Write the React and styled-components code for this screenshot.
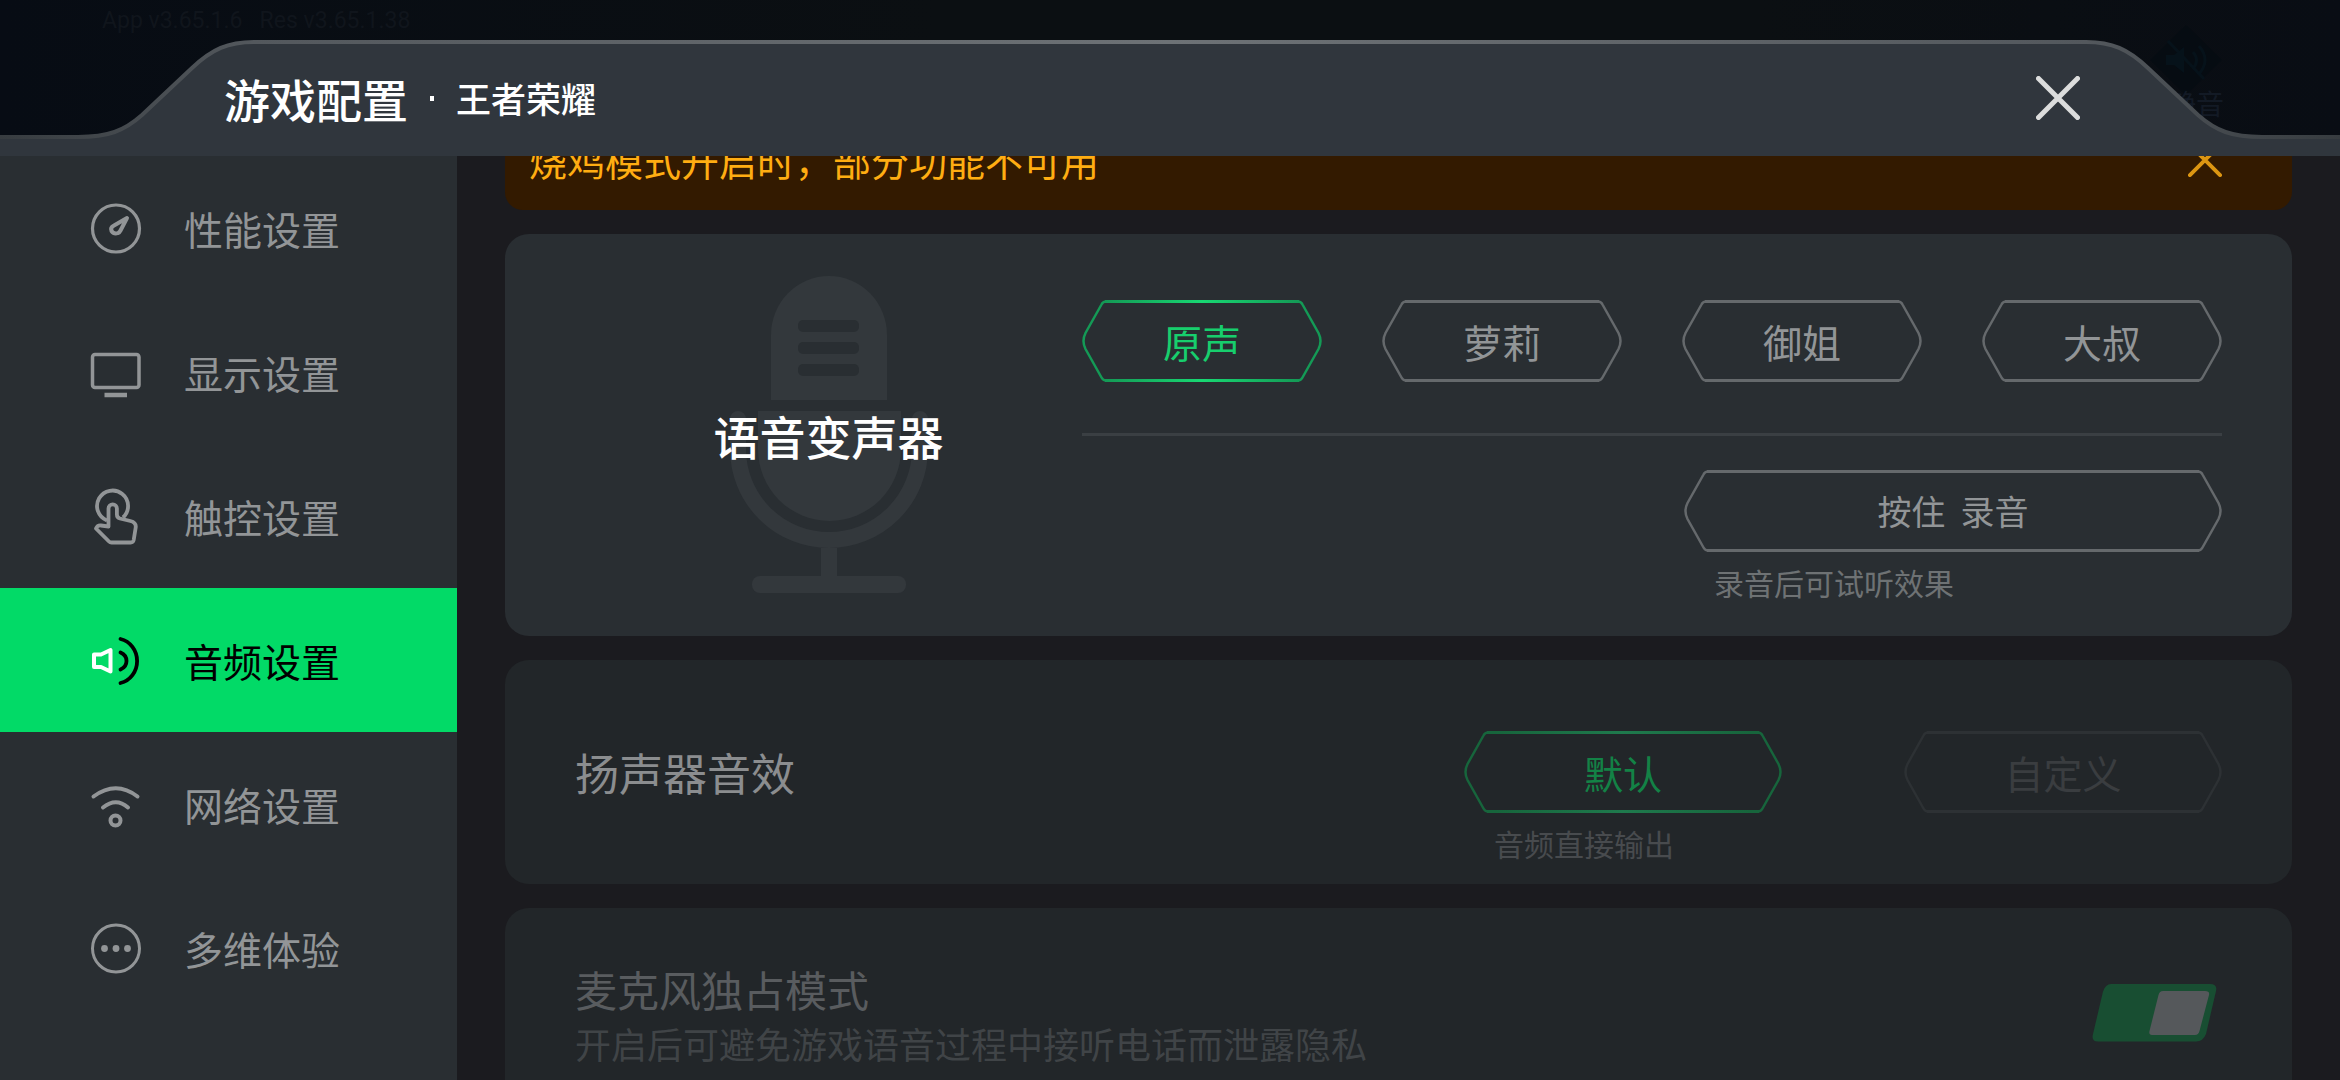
import React, { useId, useState } from "react";
import styled, { createGlobalStyle, css } from "styled-components";

const GlobalStyle = createGlobalStyle`
  *, *::before, *::after { box-sizing: border-box; }
  body {
    margin: 0;
    background: #090d14;
    font-family: "Noto Sans CJK SC", "Noto Sans", sans-serif;
  }
  button { font-family: inherit; }
`;

const Page = styled.div`
  display: flex;
  flex-direction: column;
  height: 100vh;
  overflow: hidden;
  background: #090d14;
`;

/* ---------- header ---------- */

const Header = styled.header`
  display: grid;
  flex: none;
  height: 156px;
  background: linear-gradient(90deg, #070c14, #0b0f12 40%, #0b0f12 75%, #090d14);
  > * { grid-area: 1 / 1; }
`;

const GameBackdrop = styled.div`
  display: flex;
  justify-content: space-between;
  padding: 3px 116px 0 102px;
  font-family: Roboto, "Noto Sans CJK SC", sans-serif;
  font-size: 23px;
  line-height: 36px;
  color: #10151c;
  white-space: pre;
`;

const MuteBadge = styled.div`
  display: flex;
  flex-direction: column;
  align-items: flex-end;
  padding-top: 22px;
  font-size: 28px;
  line-height: 22px;
  color: #131a25;
`;

const Shell = styled.div`
  display: flex;
`;

const ShellCorner = styled.svg`
  display: block;
  flex: none;
  width: 254px;
  height: 156px;
  transform: ${(p) => (p.$flip ? "scaleX(-1)" : "none")};
`;

const ShellMiddle = styled.div`
  flex: 1;
  margin-top: 40px;
  background:
    linear-gradient(90deg, #53585d, #6d7276 50%, #53585d) top / 100% 4px no-repeat,
    #30363d;
`;

const HeaderContent = styled.div`
  display: flex;
  align-items: center;
  margin-top: 40px;
  padding: 0 260px 0 224px;
  color: #fff;
`;

const Title = styled.h1`
  margin: 0;
  font-size: 46px;
  line-height: 60px;
  font-weight: 500;
`;

const Dot = styled.span`
  width: 4px;
  height: 5px;
  margin: 0 22px;
  background: #fff;
`;

const GameName = styled.span`
  font-size: 35px;
  line-height: 60px;
  font-weight: 500;
`;

const IconButton = styled.button`
  display: flex;
  padding: 0;
  margin-left: auto;
  border: 0;
  background: none;
  color: ${(p) => p.$color};
  cursor: pointer;
  svg { display: block; width: ${(p) => p.$size}px; height: ${(p) => p.$size}px; }
`;

/* ---------- body ---------- */

const Body = styled.div`
  display: flex;
  flex: 1;
  min-height: 0;
`;

const Sidebar = styled.nav`
  flex: none;
  width: 457px;
  background: #292e32;
`;

const NavItem = styled.button`
  display: flex;
  align-items: center;
  gap: 42px;
  width: 100%;
  height: 144px;
  padding: 0 0 0 90px;
  border: 0;
  background: ${(p) => (p.$active ? "#02da67" : "transparent")};
  color: ${(p) => (p.$active ? "#000" : "#929597")};
  font-size: 39px;
  line-height: 56px;
  text-align: left;
  cursor: pointer;
  svg { display: block; width: 52px; height: 52px; overflow: visible; }
`;

const Main = styled.main`
  flex: 1;
  min-width: 0;
  overflow: hidden;
  padding: 0 48px;
  background: #1b1b1f;
`;

/* The list is scrolled so that the notice is half under the header. */
const List = styled.div`
  display: flex;
  flex-direction: column;
  gap: 24px;
  margin-top: -46px;
`;

const Notice = styled.div`
  display: flex;
  align-items: center;
  height: 100px;
  padding: 0 70px 0 24px;
  border-radius: 18px;
  background: #331a00;
  color: #ffad12;
  font-size: 38px;
  line-height: 56px;
`;

const Card = styled.section`
  display: flex;
  align-items: center;
  justify-content: space-between;
  padding: 0 70px;
  border-radius: 24px;
  background: ${(p) => (p.$disabled ? "#222629" : "#292e32")};
`;

const VoiceHero = styled.div`
  display: grid;
  flex: 1;
  place-items: center;
  > * { grid-area: 1 / 1; }
`;

const MicArt = styled.svg`
  display: block;
  width: 198px;
  height: 318px;
`;

const HeroTitle = styled.h2`
  margin: 0;
  z-index: 1;
  font-size: 46px;
  line-height: 60px;
  font-weight: 500;
  color: #fff;
`;

const VoiceControls = styled.div`
  display: flex;
  flex-direction: column;
  align-items: flex-end;
  padding: 66px 0 32px;
`;

const ChipRow = styled.div`
  display: flex;
  gap: ${(p) => p.$gap}px;
`;

const Divider = styled.hr`
  width: 100%;
  height: 3px;
  margin: 51px 0 34px;
  border: 0;
  background: #3a3f43;
`;

const Field = styled.div`
  display: flex;
  flex-direction: column;
`;

const Hint = styled.p`
  margin: 8px 0 0;
  padding-left: 30px;
  font-size: 30px;
  line-height: 44px;
  color: ${(p) => (p.$disabled ? "#484b4e" : "#6e7274")};
`;

const tones = {
  on: { text: "#17ce6d", edge: "#149a56", glow: "#18d873" },
  off: { text: "#929597", edge: "#65696c", glow: "#65696c" },
  onDim: { text: "#138246", edge: "#17653c", glow: "#1f7a4d" },
  offDim: { text: "#3a3d40", edge: "#2d3134", glow: "#2d3134" },
};

const ChipButton = styled.button`
  display: grid;
  place-items: center;
  padding: 0;
  border: 0;
  background: none;
  color: ${(p) => p.$tone.text};
  font-size: ${(p) => (p.$small ? 34 : 39)}px;
  line-height: 56px;
  white-space: pre;
  cursor: pointer;
  > * { grid-area: 1 / 1; }
  svg { display: block; }
`;

const OutputControls = styled.div`
  padding: 71px 0 19px;
`;

const RowTitle = styled.h2`
  margin: 0;
  font-size: 44px;
  line-height: 60px;
  font-weight: 400;
  color: #8b8d8f;
`;

const ToggleText = styled.div`
  display: flex;
  flex-direction: column;
  padding: 51px 0;
`;

const ToggleLabel = styled.label`
  font-size: 42px;
  line-height: 60px;
  color: #595c5f;
`;

const ToggleNote = styled.span`
  font-size: 36px;
  line-height: 48px;
  color: #404447;
`;

const stacked = css`grid-area: 1 / 1;`;

const Switch = styled.div`
  display: grid;
  width: 130px;
  height: 60px;
  svg { ${stacked} display: block; }
`;

const SwitchInput = styled.input`
  ${stacked}
  z-index: 1;
  width: 100%;
  height: 100%;
  margin: 0;
  opacity: 0;
`;

/* ---------- drawings ---------- */

function Cross({ width }) {
  return (
    <svg viewBox="0 0 44 44" fill="none" stroke="currentColor" strokeWidth={width} strokeLinecap="round">
      <path d="M2.5 2.5 41.5 41.5M41.5 2.5 2.5 41.5" />
    </svg>
  );
}

const cornerEdge = "M0 137 H78 C108 137 124 131 142 115 L192 68 C212 49 228 42 254 42";

function Corner({ flip }) {
  const id = useId();
  return (
    <ShellCorner $flip={flip} viewBox="0 0 254 156" aria-hidden="true">
      <defs>
        <linearGradient id={id} gradientUnits="userSpaceOnUse" x1="0" y1="0" x2="254" y2="0">
          <stop offset="0" stopColor="#373c40" />
          <stop offset="1" stopColor="#53585d" />
        </linearGradient>
      </defs>
      <path d={cornerEdge + " V156 H0 Z"} fill="#30363d" />
      <path d={cornerEdge} fill="none" stroke={`url(#${id})`} strokeWidth="4" />
    </ShellCorner>
  );
}

function MuteIcon() {
  return (
    <svg width="76" height="70" viewBox="0 0 76 70" aria-hidden="true">
      <path d="M38 0 74 35 38 70 2 35Z" fill="#060c12" />
      <path d="M18 30h8l10-8v26l-10-8h-8z" fill="#06121a" />
      <path d="M45 27q7 8 0 17M51 21q12 14 0 28M20 16 56 54" fill="none" stroke="#06121a" strokeWidth="3" />
    </svg>
  );
}

function Mic() {
  return (
    <MicArt viewBox="0 0 198 318" fill="#33383c" aria-hidden="true">
      <path d="M41 124V59a58 59 0 0 1 116 0v65z" />
      <g fill="#292e32">
        <rect x="68" y="44" width="61" height="12" rx="5" />
        <rect x="68" y="66" width="61" height="12" rx="5" />
        <rect x="68" y="88" width="61" height="12" rx="5" />
      </g>
      <path d="M28 135H171V173a71.500 72 0 0 1-143 0z" />
      <path d="M8 143v30a91 91 0 0 0 182 0v-30" fill="none" stroke="#33383c" strokeWidth="16" strokeLinecap="round" />
      <rect x="91" y="272" width="16" height="28" />
      <rect x="22" y="300" width="154" height="17" rx="8" />
    </MicArt>
  );
}

function Chip({ width, tone, small, children, pressed, disabled, onClick }) {
  const id = useId();
  const t = tones[tone];
  const r = width - 1;
  return (
    <ChipButton type="button" $tone={t} $small={small} aria-pressed={pressed} disabled={disabled} onClick={onClick}>
      <svg width={width} height="82" viewBox={`0 0 ${width} 82`} fill="none" aria-hidden="true">
        <defs>
          <linearGradient id={id} gradientUnits="userSpaceOnUse" x1="0" y1="0" x2={width} y2="0">
            <stop offset="0.1" stopColor={t.edge} />
            <stop offset="0.5" stopColor={t.glow} />
            <stop offset="0.9" stopColor={t.edge} />
          </linearGradient>
        </defs>
        <path
          d={`M24 1.500 Q21 1.500 19.500 4.500 L3.500 33 Q-.5 41 3.500 49 L19.500 77.500 Q21 80.500 24 80.500 M${r - 23} 1.500 Q${r - 20} 1.500 ${r - 18.5} 4.500 L${r - 2.5} 33 Q${r + 1.5} 41 ${r - 2.5} 49 L${r - 18.5} 77.500 Q${r - 20} 80.500 ${r - 23} 80.500`}
          stroke={t.edge}
          strokeWidth="2.500"
        />
        <path d={`M23 1.500H${width - 23}M23 80.500H${width - 23}`} stroke={`url(#${id})`} strokeWidth="3" />
      </svg>
      <span>{children}</span>
    </ChipButton>
  );
}

const icon = { viewBox: "0 0 52 52", fill: "none", stroke: "currentColor", strokeWidth: 3, "aria-hidden": true };

const navItems = [
  {
    label: "性能设置",
    art: (
      <svg {...icon}>
        <circle cx="26" cy="26.500" r="23.500" strokeWidth="3.200" />
        <path d="M37 16 24 23.500Q20 25.500 21.500 29Q24 32.500 28 31Q29.500 30.500 30.500 28.500Z" strokeWidth="4" strokeLinejoin="round" />
      </svg>
    ),
  },
  {
    label: "显示设置",
    art: (
      <svg {...icon}>
        <rect x="2.500" y="8.500" width="46.500" height="33" rx="2.500" strokeWidth="3.500" />
        <path d="M14.500 49H37" strokeWidth="4.500" />
      </svg>
    ),
  },
  {
    label: "触控设置",
    art: (
      <svg {...icon} strokeLinejoin="round" strokeWidth="3.800">
        <path d="M17 30.500A15.500 15.500 0 1 1 33 27.500" />
        <path d="M18.500 36.500V18.500a4.200 4.200 0 0 1 8.400 0v6q0 3 3 4l10.500 2.500q6 1.500 5.300 6.500l-2 12.500q-.5 2.500-3 2.500H21.500q-1.500 0-2.500-1L6 38.500q1.500-3.500 5-3z" />
      </svg>
    ),
  },
  {
    label: "音频设置",
    art: (
      <svg {...icon}>
        <path d="M4 20.500h7L20.500 16V37.500L11 33H4z" stroke="#fff" strokeWidth="4" strokeLinejoin="round" />
        <path d="M30.500 18.500q6 2.500 6 8.500t-6 8.500M30.500 5a21 22.500 0 0 1 0 44" strokeLinecap="round" strokeWidth="3.800" />
      </svg>
    ),
  },
  {
    label: "网络设置",
    art: (
      <svg {...icon} strokeLinecap="round" strokeWidth="4">
        <path d="M3.500 18.500Q26 2 47.500 18.500M13 29.500Q26 19 38 29.500" />
        <circle cx="25.500" cy="42.500" r="5" strokeWidth="4" />
      </svg>
    ),
  },
  {
    label: "多维体验",
    art: (
      <svg {...icon}>
        <circle cx="26" cy="26.500" r="23.500" />
        <g fill="currentColor" stroke="none">
          <circle cx="14.500" cy="26.500" r="3.400" />
          <circle cx="26" cy="26.500" r="3.400" />
          <circle cx="37.500" cy="26.500" r="3.400" />
        </g>
      </svg>
    ),
  },
];

const voices = ["原声", "萝莉", "御姐", "大叔"];

export default function App() {
  const [tab, setTab] = useState("音频设置");
  const [voice, setVoice] = useState("原声");

  return (
    <Page>
      <GlobalStyle />
      <Header>
        <GameBackdrop aria-hidden="true">
          <span>{"App v3.65.1.6   Res v3.65.1.38"}</span>
          <MuteBadge>
            <MuteIcon />
            <span>静音</span>
          </MuteBadge>
        </GameBackdrop>
        <Shell>
          <Corner />
          <ShellMiddle />
          <Corner flip />
        </Shell>
        <HeaderContent>
          <Title>游戏配置</Title>
          <Dot />
          <GameName>王者荣耀</GameName>
          <IconButton type="button" aria-label="关闭" $size={44} $color="#dcdddd">
            <Cross width={5} />
          </IconButton>
        </HeaderContent>
      </Header>

      <Body>
        <Sidebar>
          {navItems.map((item) => (
            <NavItem key={item.label} type="button" $active={item.label === tab} onClick={() => setTab(item.label)}>
              {item.art}
              <span>{item.label}</span>
            </NavItem>
          ))}
        </Sidebar>

        <Main>
          <List>
            <Notice>
              <span>烧鸡模式开启时，部分功能不可用</span>
              <IconButton type="button" aria-label="关闭提示" $size={34} $color="#dc9612">
                <Cross width={5} />
              </IconButton>
            </Notice>

            <Card>
              <VoiceHero>
                <Mic />
                <HeroTitle>语音变声器</HeroTitle>
              </VoiceHero>
              <VoiceControls>
                <ChipRow $gap={60}>
                  {voices.map((name) => (
                    <Chip
                      key={name}
                      width={240}
                      tone={name === voice ? "on" : "off"}
                      pressed={name === voice}
                      onClick={() => setVoice(name)}
                    >
                      {name}
                    </Chip>
                  ))}
                </ChipRow>
                <Divider />
                <Field>
                  <Chip width={538} tone="off" small>{"按住\u00a0\u00a0录音"}</Chip>
                  <Hint>录音后可试听效果</Hint>
                </Field>
              </VoiceControls>
            </Card>

            <Card $disabled>
              <RowTitle>扬声器音效</RowTitle>
              <OutputControls>
                <ChipRow $gap={122}>
                  <Chip width={318} tone="onDim" pressed disabled>默认</Chip>
                  <Chip width={318} tone="offDim" pressed={false} disabled>自定义</Chip>
                </ChipRow>
                <Hint $disabled>音频直接输出</Hint>
              </OutputControls>
            </Card>

            <Card $disabled>
              <ToggleText>
                <ToggleLabel htmlFor="mic-exclusive">麦克风独占模式</ToggleLabel>
                <ToggleNote>开启后可避免游戏语音过程中接听电话而泄露隐私</ToggleNote>
              </ToggleText>
              <Switch>
                <svg width="130" height="60" viewBox="0 0 130 60" aria-hidden="true">
                  <path d="M19 1H118Q125.500 1 124 8L114 51Q111 58.500 104 58.500H6Q-.5 58.500 .8 52L11 8.500Q13.500 1 19 1Z" fill="#184e32" />
                  <path d="M71 8H113Q118 8 117 12L107.500 48Q106.500 52 103 52H60Q56.500 52 57.500 48L66.500 12Q67.500 8 71 8Z" fill="#55585b" />
                </svg>
                <SwitchInput id="mic-exclusive" type="checkbox" defaultChecked disabled />
              </Switch>
            </Card>
          </List>
        </Main>
      </Body>
    </Page>
  );
}
